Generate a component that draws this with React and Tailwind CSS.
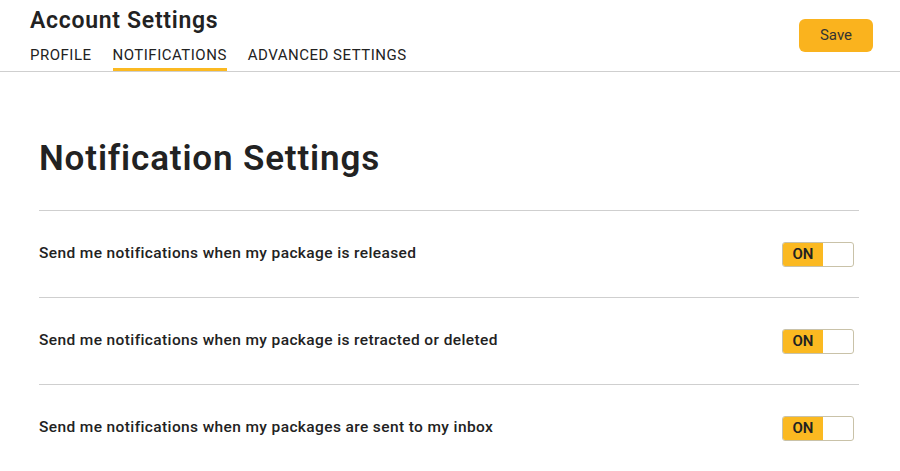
import { useState } from 'react';

const rows = [
  'Send me notifications when my package is released',
  'Send me notifications when my package is retracted or deleted',
  'Send me notifications when my packages are sent to my inbox',
];

function Toggle({ on, onClick }) {
  return (
    <button
      onClick={onClick}
      className="flex h-[25px] w-[72px] overflow-hidden rounded-[3px] border border-[#c9c2a8] bg-white"
    >
      <span
        className={`flex h-full w-[40px] items-center justify-center text-[15px] font-semibold text-[#222] ${on ? 'bg-[#fbb921]' : 'bg-white'}`}
      >
        {on ? 'ON' : 'OFF'}
      </span>
    </button>
  );
}

export default function App() {
  const [tab, setTab] = useState('NOTIFICATIONS');
  const [state, setState] = useState([true, true, true]);
  const tabs = ['PROFILE', 'NOTIFICATIONS', 'ADVANCED SETTINGS'];

  return (
    <div className="min-h-screen bg-white text-[#222] font-['Roboto',sans-serif]">
      {/* header */}
      <div className="flex items-start justify-between border-b border-[#cfcfcf] pl-[30px] pr-[27px]">
        <div>
          <h1 className="pt-[6px] text-[23px] font-semibold leading-[30px] tracking-[0.7px]">Account Settings</h1>
          <div className="mt-[2px] flex gap-[21px]">
            {tabs.map((t) => (
              <button
                key={t}
                onClick={() => setTab(t)}
                className={`h-[33px] border-b-[3px] pt-[3px] text-[15px] leading-[20px] tracking-[0.5px] ${tab === t ? 'border-[#fbb921]' : 'border-transparent'}`}
              >
                {t}
              </button>
            ))}
          </div>
        </div>
        <button className="mt-[19px] h-[33px] w-[74px] rounded-[6px] bg-[#fab31e] text-[15px] text-[#333]">Save</button>
      </div>

      {/* content */}
      <div className="px-[39px] pr-[41px]">
        <h2 className="pt-[62px] pb-[26px] text-[35px] font-semibold leading-[50px] tracking-[0.85px]">Notification Settings</h2>
        {rows.map((r, i) => (
          <div key={r} className="flex h-[87px] items-center justify-between border-t border-[#cfcfcf] pr-[5px]">
            <span className="text-[15.5px] font-medium tracking-[0.38px]">{r}</span>
            <Toggle on={state[i]} onClick={() => setState(state.map((s, j) => (j === i ? !s : s)))} />
          </div>
        ))}
      </div>
    </div>
  );
}
